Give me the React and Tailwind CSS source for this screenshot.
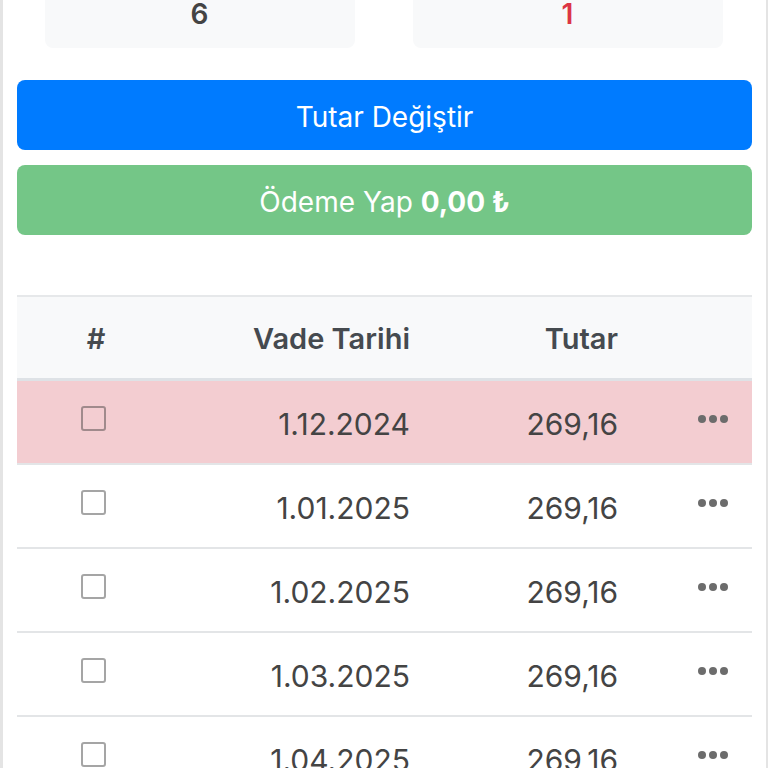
import React from 'react';

const ROWS = [
    { date: '1.12.2024', amount: '269,16', overdue: true },
    { date: '1.01.2025', amount: '269,16' },
    { date: '1.02.2025', amount: '269,16' },
    { date: '1.03.2025', amount: '269,16' },
    { date: '1.04.2025', amount: '269,16' },
];

const GRID = 'grid grid-cols-[158px_259px_208px_109px]';

function Dots() {
    return (
        <span className="flex gap-[3px]">
            <span className="h-[8px] w-[8px] rounded-full bg-[#6c6c6c]" />
            <span className="h-[8px] w-[8px] rounded-full bg-[#6c6c6c]" />
            <span className="h-[8px] w-[8px] rounded-full bg-[#6c6c6c]" />
        </span>
    );
}

export default function App() {
    return (
        <div className="h-[768px] overflow-hidden bg-white font-['Inter',sans-serif]">
            <div className="h-full border-l-[3px] border-r-[2px] border-[#e4e4e4] pl-[14px] pr-[14px]">
                <div className="flex justify-center gap-[58px] pr-[2px]">
                    <div className="flex h-[48px] w-[310px] items-start justify-center rounded-b-lg bg-[#f8f9fa]">
                        <span className="-mt-[7px] text-[28px] font-semibold text-[#444]">6</span>
                    </div>
                    <div className="flex h-[48px] w-[310px] items-start justify-center rounded-b-lg bg-[#f8f9fa]">
                        <span className="-mt-[7px] text-[28px] font-semibold text-[#dc3545]">1</span>
                    </div>
                </div>

                <button className="mt-[32px] flex h-[70px] w-full items-center justify-center rounded-lg bg-[#007bff] pt-[3px] text-[28px] text-white">
                    Tutar Değiştir
                </button>
                <button className="mt-[15px] flex h-[70px] w-full items-center justify-center rounded-lg bg-[#74c687] pt-[3px] text-[28px] text-white">
                    Ödeme Yap&nbsp;<span className="font-bold">0,00 ₺</span>
                </button>

                <div className="mt-[60px] border-t-2 border-[#e6e8ea]">
                    <div className={`${GRID} h-[84px] items-center border-b-[3px] border-[#dee2e6] bg-[#f8f9fa] pt-[2px] text-[29px] font-semibold text-[#454a4f]`}>
                        <div className="text-center">#</div>
                        <div className="pr-[24px] text-right">Vade Tarihi</div>
                        <div className="pr-[24px] text-right">Tutar</div>
                        <div />
                    </div>
                    {ROWS.map((row) => (
                        <div
                            key={row.date}
                            className={`${GRID} h-[84px] border-b-2 border-[#e3e5e7] text-[30px] text-[#444] ${row.overdue ? 'bg-[#f3cdd1]' : 'bg-white'}`}
                        >
                            <div className="flex justify-center pr-[6px] pt-[25px]">
                                <span className={`h-[25px] w-[25px] rounded-[3px] border-2 ${row.overdue ? 'border-[#a08a8c]' : 'border-[#a5a5a5]'}`} />
                            </div>
                            <div className="flex items-center justify-end pr-[24px] pt-[4px]">{row.date}</div>
                            <div className="flex items-center justify-end pr-[24px] pt-[4px]">{row.amount}</div>
                            <div className="flex items-start pl-[56px] pt-[34px]">
                                <Dots />
                            </div>
                        </div>
                    ))}
                </div>
            </div>
        </div>
    );
}
